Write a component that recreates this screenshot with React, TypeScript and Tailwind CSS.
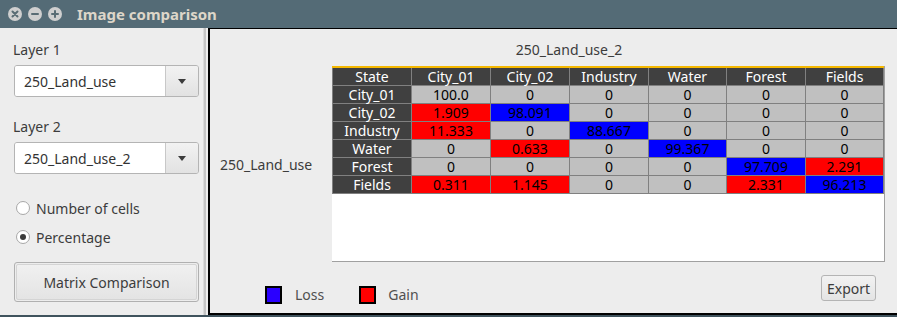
import React from "react";

const FONT = { fontFamily: '"Noto Sans", "DejaVu Sans", sans-serif' };

type Cell = { v: string; c: "g" | "r" | "b" };

const cols = ["City_01", "City_02", "Industry", "Water", "Forest", "Fields"];
const rows: { name: string; cells: Cell[] }[] = [
  { name: "City_01", cells: [{ v: "100.0", c: "g" }, { v: "0", c: "g" }, { v: "0", c: "g" }, { v: "0", c: "g" }, { v: "0", c: "g" }, { v: "0", c: "g" }] },
  { name: "City_02", cells: [{ v: "1.909", c: "r" }, { v: "98.091", c: "b" }, { v: "0", c: "g" }, { v: "0", c: "g" }, { v: "0", c: "g" }, { v: "0", c: "g" }] },
  { name: "Industry", cells: [{ v: "11.333", c: "r" }, { v: "0", c: "g" }, { v: "88.667", c: "b" }, { v: "0", c: "g" }, { v: "0", c: "g" }, { v: "0", c: "g" }] },
  { name: "Water", cells: [{ v: "0", c: "g" }, { v: "0.633", c: "r" }, { v: "0", c: "g" }, { v: "99.367", c: "b" }, { v: "0", c: "g" }, { v: "0", c: "g" }] },
  { name: "Forest", cells: [{ v: "0", c: "g" }, { v: "0", c: "g" }, { v: "0", c: "g" }, { v: "0", c: "g" }, { v: "97.709", c: "b" }, { v: "2.291", c: "r" }] },
  { name: "Fields", cells: [{ v: "0.311", c: "r" }, { v: "1.145", c: "r" }, { v: "0", c: "g" }, { v: "0", c: "g" }, { v: "2.331", c: "r" }, { v: "96.213", c: "b" }] },
];

const bgFor = (c: Cell["c"]) =>
  c === "r" ? "bg-[#ff0000]" : c === "b" ? "bg-[#0000ff]" : "bg-[#c0c0c0]";

function WinBtn({ kind }: { kind: "x" | "-" | "+" }) {
  return (
    <div className="w-[14px] h-[14px] rounded-full bg-[#cfcfcf] flex items-center justify-center">
      <svg width="14" height="14" viewBox="0 0 14 14">
        {kind === "x" && (
          <path d="M4.5 4.5 L9.5 9.5 M9.5 4.5 L4.5 9.5" stroke="#596c74" strokeWidth="2" strokeLinecap="round" />
        )}
        {kind === "-" && <path d="M4 7 H10" stroke="#596c74" strokeWidth="2" strokeLinecap="round" />}
        {kind === "+" && (
          <path d="M4 7 H10 M7 4 V10" stroke="#596c74" strokeWidth="2" strokeLinecap="round" />
        )}
      </svg>
    </div>
  );
}

function Combo({ text }: { text: string }) {
  return (
    <div className="flex h-[32px] w-[185px] rounded-[3px] border border-[#b4b4b4] overflow-hidden">
      <div className="flex-1 bg-white flex items-center pl-[9px] text-[14px] text-[#333]">{text}</div>
      <div className="w-[33px] border-l border-[#c8c8c8] bg-gradient-to-b from-[#f2f2f2] to-[#e2e2e2] flex items-center justify-center">
        <svg width="8" height="5" viewBox="0 0 8 5">
          <path d="M0 0 H8 L4 5 Z" fill="#3c3c3c" />
        </svg>
      </div>
    </div>
  );
}

function Radio({ checked, label }: { checked?: boolean; label: string }) {
  return (
    <div className="flex items-center h-[20px] pl-[2px]">
      <div className="w-[14px] h-[14px] rounded-full border border-[#a8a8a8] bg-white flex items-center justify-center">
        {checked && <div className="w-[6px] h-[6px] rounded-full bg-[#3a3a3a]" />}
      </div>
      <span className="ml-[6px] text-[14px] text-[#3c3c3c]">{label}</span>
    </div>
  );
}

export default function App() {
  return (
    <div className="w-[897px] h-[317px] flex flex-col bg-[#ededed] overflow-hidden" style={FONT}>
      {/* Title bar */}
      <div className="h-[28px] bg-[#546b76] flex items-center pl-[8px] shrink-0">
        <div className="flex items-center gap-[6px]">
          <WinBtn kind="x" />
          <WinBtn kind="-" />
          <WinBtn kind="+" />
        </div>
        <span className="ml-[15px] text-[15px] font-bold text-[#ddd6c9]">Image comparison</span>
      </div>

      <div className="flex flex-1 min-h-0">
        {/* Left panel */}
        <div className="w-[203px] shrink-0 flex flex-col pl-[14px] pt-[11px]">
          <div className="h-[20px] flex items-center text-[14px] text-[#3c3c3c] -ml-[1px]">Layer 1</div>
          <div className="mt-[6px]">
            <Combo text="250_Land_use" />
          </div>
          <div className="mt-[19px] h-[20px] flex items-center text-[14px] text-[#3c3c3c] -ml-[1px]">Layer 2</div>
          <div className="mt-[6px]">
            <Combo text="250_Land_use_2" />
          </div>
          <div className="mt-[24px]">
            <Radio label="Number of cells" />
          </div>
          <div className="mt-[9px]">
            <Radio checked label="Percentage" />
          </div>
          <div className="mt-[15px] w-[185px] h-[40px] rounded-[3px] border border-[#b0b0b0] p-[1px]">
            <div className="w-full h-full rounded-[2px] border border-[#d4d4d4] bg-gradient-to-b from-[#f0f0f0] to-[#e4e4e4] flex items-center justify-center text-[14px] text-[#3c3c3c]">
              Matrix Comparison
            </div>
          </div>
        </div>

        {/* Splitter */}
        <div className="w-[5px] shrink-0 flex">
          <div className="w-[1px] bg-[#dadada]" />
          <div className="w-[2px] bg-[#c4c4c4]" />
          <div className="w-[2px]" />
        </div>

        {/* Right panel */}
        <div className="flex-1 flex flex-col border-l-2 border-t border-b-2 border-black min-w-0">
          <div className="ml-[44px] mr-[13px] flex justify-center h-[20px] mt-[10px] items-center text-[14px] text-[#3c3c3c]">
            250_Land_use_2
          </div>
          <div className="flex mt-[7px]">
            <div className="w-[122px] flex items-center pl-[10px] text-[14px] text-[#3c3c3c]">
              250_Land_use
            </div>
            <div className="w-[553px] h-[196px] bg-white border-r border-b border-[#a0a0a0] flex flex-col">
              <div className="h-[2px] bg-[#f5b800]" />
              <div className="border-l border-[#808080] w-[552px]">
                <div className="flex h-[18px]">
                  {["State", ...cols].map((h, i) => (
                    <div
                      key={h}
                      className={`${i === 4 || i === 6 ? "w-[78px]" : "w-[79px]"} bg-[#404040] text-white text-[14px] leading-[17px] text-center border-r border-b border-[#808080]`}
                    >
                      {h}
                    </div>
                  ))}
                </div>
                {rows.map((r) => (
                  <div key={r.name} className="flex h-[18px]">
                    <div className="w-[79px] bg-[#404040] text-white text-[14px] leading-[17px] text-center border-r border-b border-[#808080]">
                      {r.name}
                    </div>
                    {r.cells.map((c, j) => (
                      <div
                        key={j}
                        className={`${j === 3 || j === 5 ? "w-[78px]" : "w-[79px]"} ${bgFor(c.c)} text-black text-[14px] leading-[17px] text-center border-r border-b border-[#808080]`}
                      >
                        {c.v}
                      </div>
                    ))}
                  </div>
                ))}
              </div>
            </div>
          </div>

          {/* Legend + Export */}
          <div className="flex items-start mt-[13px] pr-[21px]">
            <div className="flex items-center mt-[9px] ml-[55px]">
              <div className="w-[17px] h-[18px] border-2 border-black bg-[#2a00ff]" />
              <span className="ml-[13px] text-[14px] text-[#505050]">Loss</span>
              <div className="ml-[35px] w-[17px] h-[18px] border-2 border-black bg-[#ff0000]" />
              <span className="ml-[12px] text-[14px] text-[#505050]">Gain</span>
            </div>
            <div className="ml-auto w-[55px] h-[26px] rounded-[3px] border border-[#b4b4b4] bg-gradient-to-b from-[#f2f2f2] to-[#e4e4e4] flex items-center justify-center text-[14px] text-[#3c3c3c]">
              Export
            </div>
          </div>
        </div>
      </div>
      <div className="h-[2px] bg-[#3f535d] shrink-0" />
    </div>
  );
}
